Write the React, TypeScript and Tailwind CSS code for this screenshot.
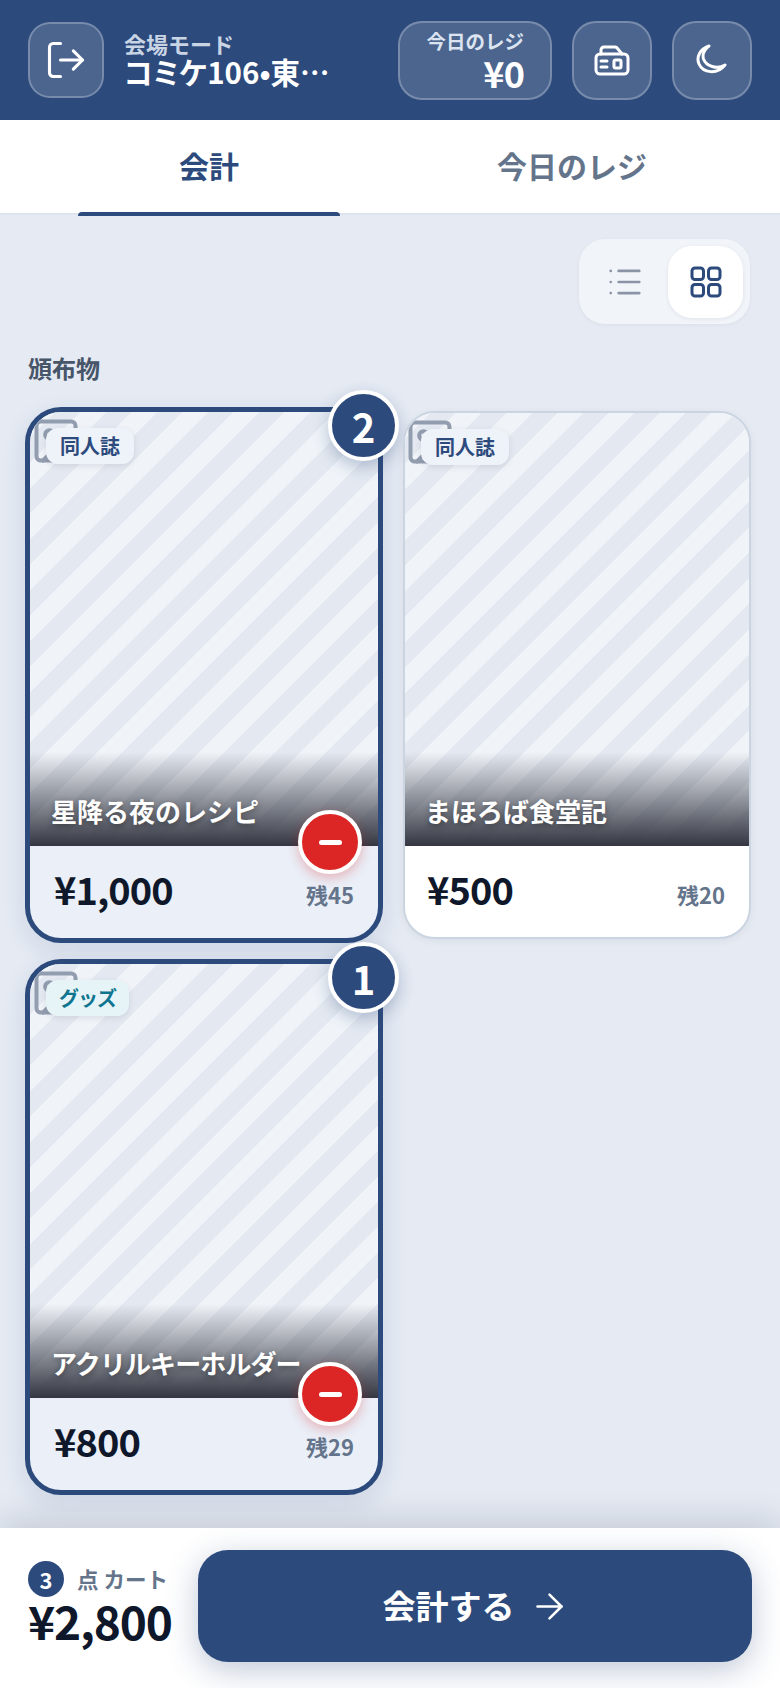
import { LogOut, List, ArrowRight, Image as ImageIcon } from "lucide-react";

function Register() {
  return (
    <svg width="36" height="36" viewBox="0 0 36 36" fill="none" stroke="white" strokeWidth="3" strokeLinecap="round" strokeLinejoin="round">
      <rect x="2" y="12" width="32" height="20" rx="4" />
      <path d="M7 12V8a3 3 0 0 1 3-3h11a3 3 0 0 1 2.5 1.5L28 12" />
      <path d="M7 19h6M7 25h6" />
      <rect x="20" y="18" width="7" height="8" rx="1.5" />
    </svg>
  );
}

function MoonIcon() {
  return (
    <svg width="32" height="32" viewBox="0 0 32 32" fill="none" stroke="white" strokeWidth="3" strokeLinecap="round" strokeLinejoin="round">
      <path d="M13 2C4 5 0 13 3 20C7 29 21 31 29 21C21 26 10 22 7.5 15C6 10 9 5 13 2Z" />
    </svg>
  );
}

function GridIcon() {
  return (
    <svg width="32" height="32" viewBox="0 0 32 32" fill="none" stroke="#2c4a7c" strokeWidth="3">
      <rect x="2" y="2" width="11.5" height="11.5" rx="3" />
      <rect x="18.5" y="2" width="11.5" height="11.5" rx="3" />
      <rect x="2" y="18.5" width="11.5" height="11.5" rx="3" />
      <rect x="18.5" y="18.5" width="11.5" height="11.5" rx="3" />
    </svg>
  );
}

type P = { title: string; tag: string; price: string; stock: string; count?: number; teal?: boolean; tight?: boolean };

function Card({ title, tag, price, stock, count, teal, tight }: P) {
  const sel = count !== undefined;
  return (
    <div className={sel ? "relative h-[536px] rounded-[36px] border-[5px] border-[#2c4a7c] bg-[#eaeff8] shadow-[0_8px_24px_rgba(44,74,124,0.12)]" : "relative h-[528px] self-center rounded-[32px] border-2 border-[#cbd5e1] bg-white shadow-[0_2px_8px_rgba(15,23,42,0.06)]"}>
      <div className={sel ? "relative h-[434px] overflow-hidden rounded-t-[31px]" : "relative h-[433px] overflow-hidden rounded-t-[30px]"}>
        <div className="absolute inset-0 bg-[repeating-linear-gradient(135deg,#f0f4f9,#f0f4f9_18px,#e4e9f1_18px,#e4e9f1_36px)]" />
        <ImageIcon className={sel ? "absolute left-0 top-[3px] text-[#939db0]" : "absolute left-[-1px] top-[3px] text-[#939db0]"} size={52} strokeWidth={1.85} />
        <div className={teal ? "absolute left-[16px] top-[16px] rounded-[12px] bg-[#e6f4f7] px-[13px] py-[3px] text-[20px] font-semibold leading-[30px] tracking-[-1px] text-[#0e7490] shadow-[0_2px_6px_rgba(15,23,42,0.1)]" : "absolute left-[16px] top-[16px] rounded-[12px] bg-[#eef2f9] px-[14px] py-[3px] text-[20px] font-semibold leading-[30px] text-[#2c4a7c] shadow-[0_2px_6px_rgba(15,23,42,0.1)]"}>{tag}</div>
        <div className="absolute inset-x-0 bottom-0 h-[94px] bg-gradient-to-b from-transparent to-[#343742]" />
        <div className={(sel ? "left-[21px] " : "left-[20px] ") + (tight ? "tracking-[-0.9px] " : "") + "absolute bottom-[16px] whitespace-nowrap text-[26px] font-bold leading-[38px] text-white [text-shadow:0_2px_6px_rgba(0,0,0,0.4)]"}>{title}</div>
      </div>
      <div className={sel ? "flex items-end justify-between pl-[24px] pr-[24px] pt-[15px]" : "flex items-end justify-between pl-[22px] pr-[24px] pt-[15px]"}>
        <div className="text-[38px] font-bold leading-[56px] tracking-tight text-[#0f172a]">{price}</div>
        <div className="pb-[7px] text-[22px] font-semibold leading-[32px] text-[#64748b]">{stock}</div>
      </div>
      {sel && (
        <>
          <div className="absolute right-[-21px] top-[-22px] flex h-[71px] w-[71px] items-center justify-center rounded-full border-[4px] border-white bg-[#2c4a7c] text-[40px] font-bold text-white shadow-[0_6px_16px_rgba(44,74,124,0.3)]">{count}</div>
          <div className="absolute right-[16px] top-[398px] flex h-[64px] w-[64px] items-center justify-center rounded-full border-[4px] border-white bg-[#dc2626] shadow-[0_4px_12px_rgba(220,38,38,0.3)]">
            <div className="h-[5px] w-[23px] rounded-full bg-white" />
          </div>
        </>
      )}
    </div>
  );
}

const iconBtn = "flex h-[79px] w-[80px] items-center justify-center rounded-[24px] border-2 border-white/25 bg-white/15";

export default function App() {
  return (
    <div className="flex h-[1688px] w-[780px] flex-col overflow-hidden bg-[#e5eaf3] font-['Noto_Sans_CJK_JP',sans-serif]">
      <header className="flex h-[120px] shrink-0 items-center bg-[#2c4a7c] pl-[28px] pr-[28px]">
        <div className="flex h-[76px] w-[76px] items-center justify-center rounded-[22px] border-2 border-white/25 bg-white/15">
          <LogOut size={44} strokeWidth={1.7} color="white" />
        </div>
        <div className="ml-[20px] w-[220px] whitespace-nowrap pb-[2px]">
          <div className="text-[22px] font-semibold leading-[25px] text-[#c9d4e5]">会場モード</div>
          <div className="text-[29.5px] font-bold leading-[31px] text-white [font-feature-settings:'palt']">コミケ106•東…</div>
        </div>
        <div className="ml-auto mr-[20px] flex h-[79px] w-[154px] flex-col items-end justify-center rounded-[24px] border-2 border-white/25 bg-white/15 pb-[2px] pr-[26px]">
          <div className="whitespace-nowrap text-[19.5px] font-semibold leading-[26px] text-[#dbe4f0]">今日のレジ</div>
          <div className="text-[36px] font-bold leading-[36px] tracking-tight text-white">¥0</div>
        </div>
        <div className={iconBtn + " mr-[20px]"}><Register /></div>
        <div className={iconBtn}><MoonIcon /></div>
      </header>
      <nav className="relative flex h-[95px] shrink-0 border-b-2 border-[#dde4ee] bg-white">
        <div className="flex w-[418px] items-center justify-center pb-[2px] text-[30px] font-bold text-[#2c4a7c]">会計</div>
        <div className="flex w-[360px] items-center justify-center pb-[2px] pr-[52px] text-[30px] font-bold text-[#64748b]">今日のレジ</div>
        <div className="absolute bottom-[-3px] left-[78px] h-[4px] w-[262px] rounded-t-[4px] bg-[#2c4a7c]" />
      </nav>
      <main className="relative min-h-0 flex-1">
        <div className="flex justify-end pr-[30px] pt-[24px]">
          <div className="flex h-[85px] w-[171px] items-center justify-between rounded-[26px] bg-[#f1f5fa] pl-[8px] pr-[7px] shadow-[0_1px_4px_rgba(15,23,42,0.05)]">
            <div className="flex h-[72px] w-[75px] items-center justify-center"><List size={38} strokeWidth={1.7} color="#8a94a6" /></div>
            <div className="flex h-[72px] w-[75px] items-center justify-center rounded-[24px] bg-white shadow-[0_1px_4px_rgba(15,23,42,0.08)]"><GridIcon /></div>
          </div>
        </div>
        <div className="pl-[28px] pt-[27px] text-[24px] font-bold leading-[34px] text-[#475569]">頒布物</div>
        <div className="grid grid-cols-[358px_348px] gap-x-[20px] gap-y-[16px] pl-[25px] pt-[22px]">
          <Card title="星降る夜のレシピ" tag="同人誌" price="¥1,000" stock="残45" count={2} />
          <Card title="まほろば食堂記" tag="同人誌" price="¥500" stock="残20" />
          <Card title="アクリルキーホルダー" tag="グッズ" price="¥800" stock="残29" count={1} teal tight />
        </div>
      </main>
      <footer className="relative z-10 flex h-[160px] shrink-0 items-center bg-white pb-[4px] pl-[28px] pr-[28px] shadow-[0_-8px_32px_rgba(15,23,42,0.14)]">
        <div className="w-[170px]">
          <div className="flex items-center">
            <div className="flex h-[36px] w-[36px] items-center justify-center rounded-full bg-[#2c4a7c] text-[22px] font-bold text-white">3</div>
            <div className="ml-[13px] whitespace-nowrap text-[21.5px] font-semibold leading-[36px] text-[#64748b]">点 カート</div>
          </div>
          <div className="pb-[8px] text-[46px] font-bold leading-[46px] tracking-tight text-[#0f172a]">¥2,800</div>
        </div>
        <div className="flex h-[112px] flex-1 items-center justify-center gap-[14px] rounded-[30px] bg-[#2c4a7c] pl-[2px] text-[33px] font-bold text-white shadow-[0_8px_32px_rgba(44,74,124,0.3)]">
          <span>会計する</span> <ArrowRight size={41} strokeWidth={1.5} />
        </div>
      </footer>
    </div>
  );
}
